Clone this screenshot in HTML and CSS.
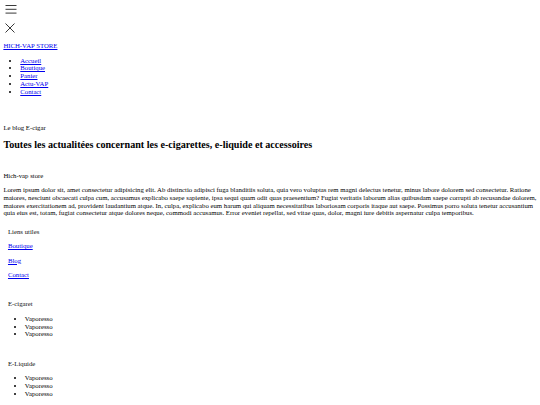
FILE: index.html
```html
<!DOCTYPE html>
<html lang="fr">
<head>
<meta charset="utf-8">
<title>Hich-vap store</title>
<link rel="stylesheet" href="styles.css">
</head>
<body>
<header class="header">
  <div class="menu-open">
    <svg class="icon-burger" width="12" height="10" viewBox="0 0 12 10"><path d="M0.5 1.2h11M0.5 5h11M0.5 8.8h11" stroke="#222" stroke-width="0.9" fill="none"/></svg>
  </div>
  <nav class="nav">
    <div class="menu-close">
      <svg class="icon-close" width="10" height="10" viewBox="0 0 10 10"><path d="M0.5 0.5L9.5 9.5M9.5 0.5L0.5 9.5" stroke="#222" stroke-width="0.9" fill="none"/></svg>
    </div>
    <p class="brand"><a href="#">HICH-VAP STORE</a></p>
    <ul class="nav-list">
      <li><a href="#">Accueil</a></li>
      <li><a href="#">Boutique</a></li>
      <li><a href="#">Panier</a></li>
      <li><a href="#">Actu-VAP</a></li>
      <li><a href="#">Contact</a></li>
    </ul>
  </nav>
</header>
<section class="hero">
  <p class="hero-sub">Le blog E-cigar</p>
  <h2 class="hero-title">Toutes les actualitées concernant les e-cigarettes, e-liquide et accessoires</h2>
</section>
<footer class="footer">
  <div class="about">
    <p class="about-title">Hich-vap store</p>
    <p class="about-text">Lorem ipsum dolor sit, amet consectetur adipisicing elit. Ab distinctio adipisci fuga blanditiis soluta, quia vero voluptas rem magni delectus tenetur, minus labore dolorem sed consectetur. Ratione maiores, nesciunt obcaecati culpa cum, accusamus explicabo saepe sapiente, ipsa sequi quam odit quas praesentium? Fugiat veritatis laborum alias quibusdam saepe corrupti ab recusandae dolorem, maiores exercitationem ad, provident laudantium atque. In, culpa, explicabo eum harum qui aliquam necessitatibus laboriosam corporis itaque aut saepe. Possimus porro soluta tenetur accusantium quia eius est, totam, fugiat consectetur atque dolores neque, commodi accusamus. Error eveniet repellat, sed vitae quas, dolor, magni iure debitis aspernatur culpa temporibus.</p>
  </div>
  <div class="col">
    <div class="col-title">Liens utiles</div>
    <p class="col-link"><a href="#">Boutique</a></p>
    <p class="col-link"><a href="#">Blog</a></p>
    <p class="col-link"><a href="#">Contact</a></p>
  </div>
  <div class="col">
    <div class="col-title">E-cigaret</div>
    <ul class="col-list">
      <li>Vaporesso</li>
      <li>Vaporesso</li>
      <li>Vaporesso</li>
    </ul>
  </div>
  <div class="col">
    <div class="col-title">E-Liquide</div>
    <ul class="col-list">
      <li>Vaporesso</li>
      <li>Vaporesso</li>
      <li>Vaporesso</li>
    </ul>
  </div>
</footer>
</body>
</html>
```

FILE: styles.css
```css
body {
  margin: 3.375px;
  font-family: "Liberation Serif", "Times New Roman", serif;
  font-size: 6.75px;
  line-height: 7.76px;
  color: #000;
}
p, ul {
  margin: 6.75px 0;
}
ul {
  padding-left: 16.875px;
}
a {
  color: #0000ee;
}
.menu-open {
  height: 16px;
  padding-left: 1.4px;
}
.icon-burger {
  display: block;
  padding-top: 1.3px;
}
.menu-close {
  padding: 3.6px 0 2.4px 1.2px;
}
.icon-close {
  display: block;
}
.hero {
  padding: 14.7px 0 6px;
}
.hero-title {
  font-size: 10.125px;
  line-height: 11.64px;
  margin: 7.4px 0 8.4px;
}
.col {
  padding: 3.7px 4.6px 11px;
}
.col-title {
  color: #111;
}
```
